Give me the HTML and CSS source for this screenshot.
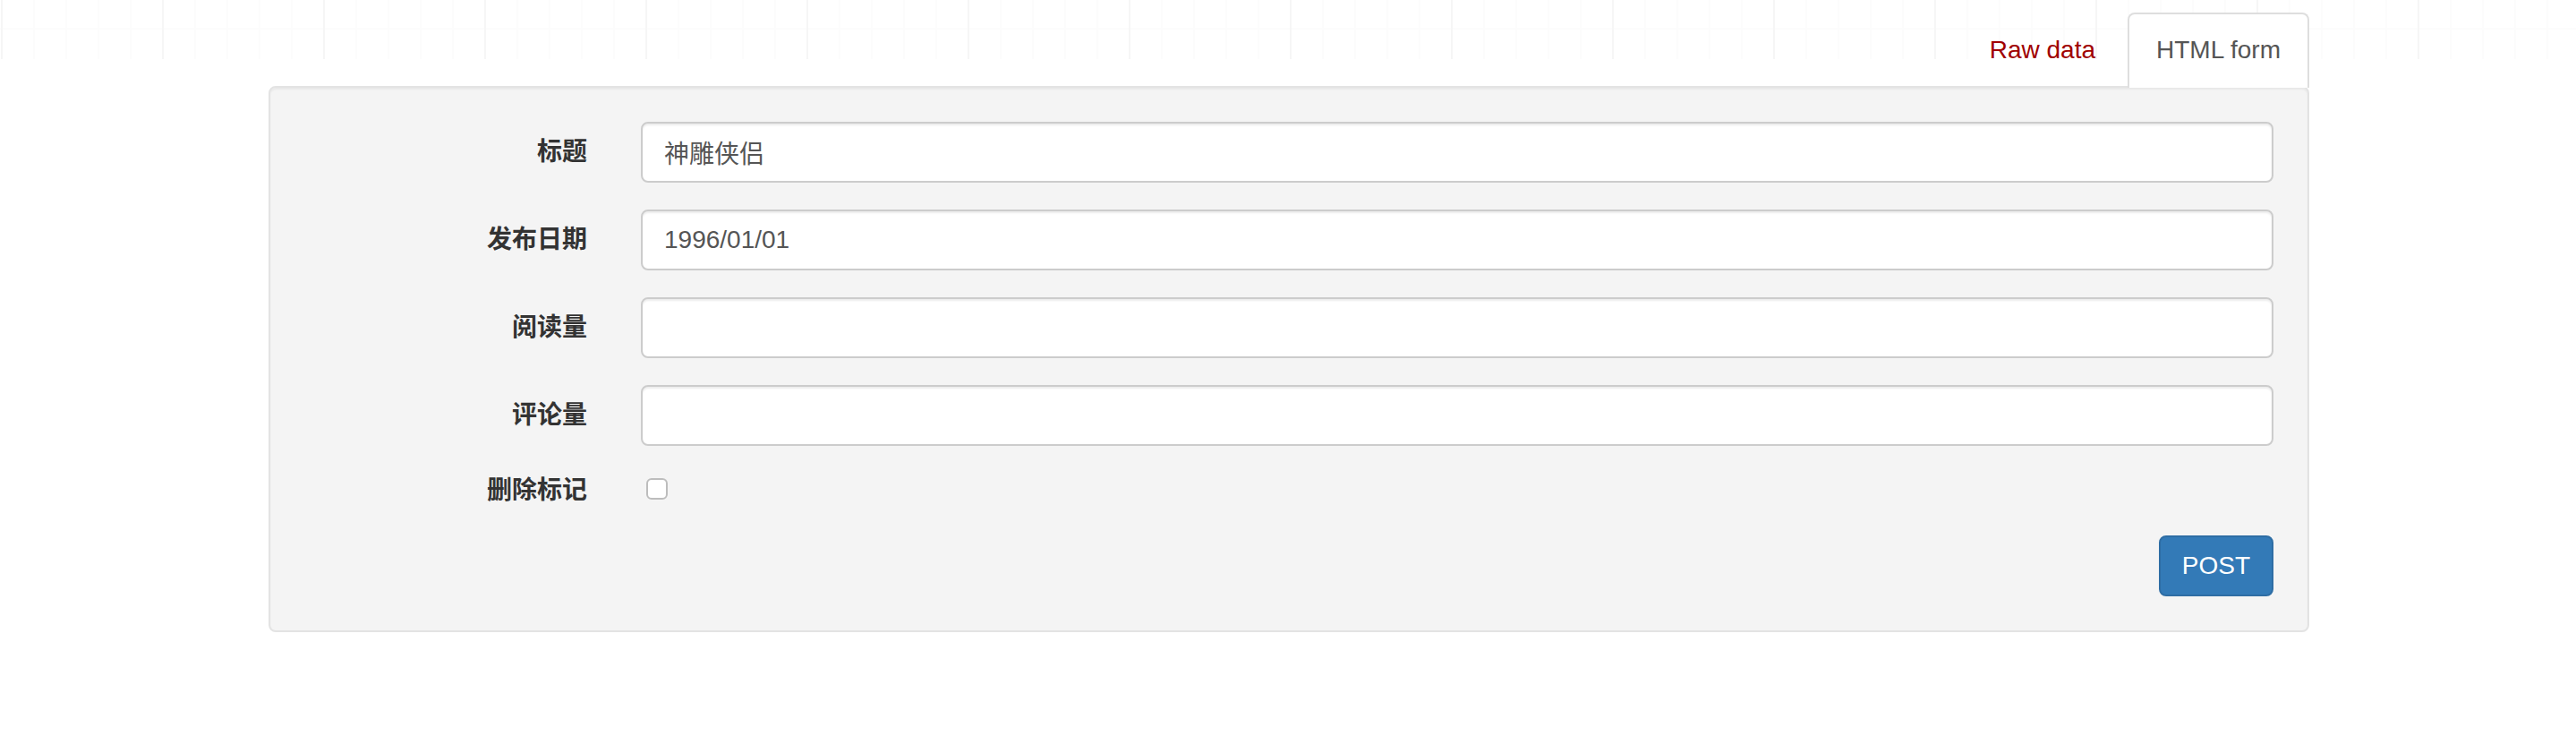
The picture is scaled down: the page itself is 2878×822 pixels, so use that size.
FILE: index.html
```html
<!DOCTYPE html>
<html lang="zh-CN">
<head>
<meta charset="utf-8">
<title>HTML form</title>
<link rel="stylesheet" href="styles.css">
</head>
<body>
<div class="container">
  <ul class="tabs">
    <li class="tab"><a href="#raw" class="tab-link">Raw data</a></li>
    <li class="tab tab-active"><a href="#form" class="tab-link">HTML form</a></li>
  </ul>
  <div class="well">
    <form class="form">
      <div class="form-group">
        <label class="control-label">标题</label>
        <input class="form-control" type="text" value="神雕侠侣">
      </div>
      <div class="form-group">
        <label class="control-label">发布日期</label>
        <input class="form-control" type="text" value="1996/01/01">
      </div>
      <div class="form-group">
        <label class="control-label">阅读量</label>
        <input class="form-control" type="text" value="">
      </div>
      <div class="form-group">
        <label class="control-label">评论量</label>
        <input class="form-control" type="text" value="">
      </div>
      <div class="form-group form-group-check">
        <label class="control-label control-label-check">删除标记</label>
        <div class="check-wrap"><input class="check" type="checkbox"></div>
      </div>
      <div class="form-actions">
        <button class="btn-primary" type="button">POST</button>
      </div>
    </form>
  </div>
</div>
</body>
</html>
```
FILE: styles.css
```css
* { box-sizing: border-box; }

html, body {
  margin: 0;
  padding: 0;
}

body {
  font-family: "Liberation Sans", "Noto Sans CJK SC", Arial, sans-serif;
  font-size: 28px;
  line-height: 40px;
  color: #333;
  background-color: #fff;
  background-image:
    repeating-linear-gradient(to right, #f6f6f6 0, #f6f6f6 2px, transparent 2px, transparent 180px),
    repeating-linear-gradient(to right, #fcfcfc 0, #fcfcfc 2px, transparent 2px, transparent 36px),
    linear-gradient(to bottom, transparent 0, transparent 31px, #fcfcfc 31px, #fcfcfc 33px, transparent 33px);
  background-size: 100% 66px, 100% 66px, 100% 66px;
  background-repeat: no-repeat;
  background-position: 1px 0, 1px 0, 0 0;
}

.container {
  width: 2340px;
  margin: 0 auto;
  padding: 14px 29px 0 31px;
}

.tabs {
  list-style: none;
  margin: 0;
  padding: 0;
  display: flex;
  justify-content: flex-end;
  position: relative;
  z-index: 1;
}

.tab {
  margin-left: 4px;
  margin-bottom: -2px;
}

.tab-link {
  display: block;
  padding: 20px 30px 22px;
  border: 2px solid transparent;
  border-bottom: none;
  border-radius: 8px 8px 0 0;
  color: #a00000;
  text-decoration: none;
  line-height: 40px;
}

.tab-active .tab-link {
  color: #555;
  background: #fff;
  border-color: #dedede;
}

.well {
  background: #f4f4f4;
  border: 2px solid #e3e3e3;
  border-radius: 8px;
  padding: 38px;
  box-shadow: inset 0 2px 2px rgba(0, 0, 0, 0.05);
}

.form-group {
  display: grid;
  grid-template-columns: 316px 1fr;
  column-gap: 60px;
  margin-bottom: 30px;
}

.control-label {
  font-family: "Liberation Sans", "Noto Sans CJK SC", sans-serif;
  font-weight: bold;
  text-align: right;
  padding-top: 14px;
  color: #333;
}

.control-label-check {
  padding-top: 0;
}

.form-control {
  display: block;
  width: 100%;
  height: 68px;
  padding: 12px 24px;
  font-family: "Liberation Sans", "Noto Sans CJK SC", sans-serif;
  font-size: 28px;
  line-height: 40px;
  color: #555;
  background: #fff;
  border: 2px solid #ccc;
  border-radius: 8px;
  box-shadow: inset 0 2px 2px rgba(0, 0, 0, 0.075);
  outline: none;
}

.form-group-check {
  height: 40px;
}

.check-wrap {
  padding-top: 6px;
}

.check {
  appearance: none;
  -webkit-appearance: none;
  display: block;
  margin: 0 0 0 6px;
  width: 24px;
  height: 24px;
  border: 2px solid #bdbdbd;
  border-radius: 6px;
  background: #fff;
}

.form-actions {
  display: flex;
  justify-content: flex-end;
}

.btn-primary {
  font-family: "Liberation Sans", sans-serif;
  font-size: 28px;
  line-height: 40px;
  height: 68px;
  padding: 12px 24px;
  color: #fff;
  background: #337ab7;
  border: 2px solid #2e6da4;
  border-radius: 8px;
}
```
